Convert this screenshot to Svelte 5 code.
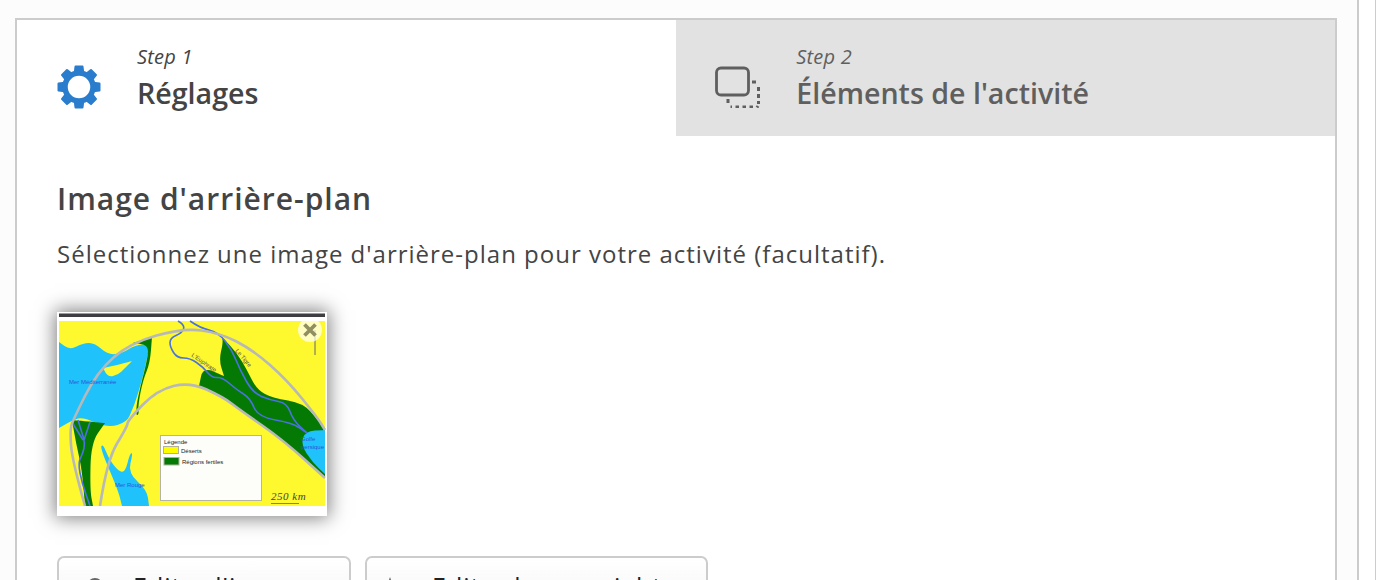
<script>
  const cogTeeth = [0, 45, 90, 135, 180, 225, 270, 315];

  // map outlines, in page coordinates because the svg viewBox starts at the thumb corner
  // a doubled point keeps a sharp corner through smooth()
  const med = [[59,342],[59,342],[70,350],[83,343],[95,343],[108,355],[123,353],[135,345],[150,344],[150,344],[143,377],[135,403],[132,410],[127,422],[108,428],[83,417],[73,420],[59,428],[59,428]];
  const redSea = [[100,448],[103,444],[108,457],[117,470],[125,473],[130,453],[133,453],[128,473],[147,490],[149,506],[149,506],[122,506],[122,506],[118,490]];
  const gulf = [[325,430],[325,430],[305,431],[301,445],[313,463],[325,474],[325,474]];
  const cyprus = [[103,368],[103,368],[117,365],[132,361],[132,361],[125,368],[118,375],[108,377]];
  const levant = [[133,343],[133,343],[152,337],[152,337],[150,363],[143,380],[138,405],[139,414],[136,416],[137,400],[148,357],[148,345]];
  const nile = [[72,420],[72,420],[105,423],[105,423],[91,443],[90,490],[93,506],[93,506],[85,506],[85,506],[82,470],[76,443]];
  const crescent = [[222,337],[222,337],[237,353],[247,370],[257,390],[273,398],[303,403],[318,420],[325,430],[325,430],[325,478],[325,478],[283,440],[240,410],[223,397],[199,386],[199,386],[203,367],[224,376],[224,376],[219,360],[223,343]];
  const euphrates = [[178,321],[185,325],[182,333],[170,338],[170,347],[177,358],[190,358],[203,367],[212,378],[222,377],[237,390],[250,398],[258,417],[293,423],[307,433]];
  const tigris = [[190,321],[200,328],[218,332],[232,350],[240,370],[253,393],[270,400],[287,403],[293,420],[307,433]];
  const nileRiver = [[78,420],[82,433],[85,443],[83,453],[78,463],[82,483],[90,506]];
  const outerArc = [[85,506],[72,460],[70,430],[73,420],[97,372],[130,343],[183,328],[220,333],[253,350],[287,380],[317,417],[325,430]];
  const innerArc = [[100,506],[107,460],[127,427],[128,420],[157,390],[190,382],[223,397],[240,410],[283,440],[325,478]];

  function smooth(pts, closed = false) {
    const mid = (a, b) => [(a[0] + b[0]) / 2, (a[1] + b[1]) / 2];
    let d = closed ? `M${mid(pts[pts.length - 1], pts[0])}` : `M${pts[0]}`;
    const last = closed ? pts.length : pts.length - 1;
    for (let i = closed ? 0 : 1; i < last; i++) {
      d += `Q${pts[i]} ${mid(pts[i], pts[(i + 1) % pts.length])}`;
    }
    return closed ? d + 'Z' : d + `L${pts[pts.length - 1]}`;
  }
</script>

<div class="page">
  <main class="wizard">
    <div class="steps">
      <div class="step active">
        <svg class="step-icon" width="44" height="44" viewBox="0 0 44 44" aria-hidden="true">
          <g fill="#2a7ccd">
            {#each cogTeeth as angle}
              <path d="M17.5 1.500q0-1 1-1h7q1 0 1 1l1 8h-11z" transform="rotate({angle} 22 22)" />
            {/each}
          </g>
          <circle cx="22" cy="22" r="14" fill="none" stroke="#2a7ccd" stroke-width="5.500" />
        </svg>
        <div class="step-text">
          <em>Step 1</em>
          <strong>Réglages</strong>
        </div>
      </div>
      <div class="step">
        <svg class="step-icon" width="46" height="42" viewBox="0 0 46 42" fill="none" stroke="#5f5f5f" aria-hidden="true">
          <rect x="1.500" y="2" width="32" height="27" rx="4.500" stroke-width="2.800" />
          <path d="M37 16h4M43.500 21v4M43.500 28v4M43.500 35v3M43 40l-1 1.500M38 41h-3.500M31 41h-3.500M24 41h-3.500M13 33v4M17 41h-1.500" stroke-width="3" />
        </svg>
        <div class="step-text">
          <em>Step 2</em>
          <strong>Éléments de l'activité</strong>
        </div>
      </div>
    </div>

    <section class="body">
      <h2>Image d'arrière-plan</h2>
      <p>Sélectionnez une image d'arrière-plan pour votre activité (facultatif).</p>

      <div class="thumb">
        <svg width="270" height="204" viewBox="57 312 270 204" aria-label="Carte du Croissant fertile">
          <rect x="57" y="312" width="270" height="204" fill="#fff" />
          <rect x="59" y="313.500" width="266" height="3.500" fill="#3d3d42" />
          <rect x="59" y="321" width="266" height="185" fill="#fdf92e" />

          <g fill="#1fc2fb">
            <path d={smooth(med, true)} />
            <path d={smooth(redSea, true)} />
          </g>
          <path d={smooth(cyprus, true)} fill="#fdf92e" />

          <g fill="#047a04">
            <path d={smooth(levant, true)} />
            <path d={smooth(nile, true)} />
            <path d={smooth(crescent, true)} />
          </g>
          <path d={smooth(gulf, true)} fill="#1fc2fb" />

          <g fill="none" stroke="#4a72e0" stroke-width="1.600">
            <path d={smooth(euphrates)} />
            <path d={smooth(tigris)} />
            <path d={smooth(nileRiver)} />
            <path d="M90 422l-6 18M72 422l11 18" />
          </g>

          <g fill="none" stroke="#b8b8b8" stroke-width="2.600">
            <path d={smooth(outerArc)} />
            <path d={smooth(innerArc)} />
          </g>

          <rect x="160.500" y="435.500" width="101" height="65" fill="#fdfefa" stroke="#b5b5a5" />
          <rect x="163.500" y="446.500" width="15" height="7" fill="#fdfd00" stroke="#b0b0a0" />
          <rect x="164" y="457.500" width="15" height="7.500" fill="#047a04" stroke="#b0b0a0" />
          <g font-family="Liberation Sans, sans-serif" font-size="6">
            <text x="164" y="443.500" fill="#222">Légende</text>
            <text x="181" y="453" fill="#222">Déserts</text>
            <text x="182" y="464" fill="#222">Régions fertiles</text>
            <g fill="#2f55d8">
              <text x="69" y="384">Mer Méditerranée</text>
              <text x="115" y="487">Mer Rouge</text>
              <text x="301" y="441">Golfe</text>
              <text x="301" y="448.500">persique</text>
            </g>
            <text x="191" y="356" fill="#555" transform="rotate(35 191 356)">L'Euphrate</text>
            <text x="235" y="351" fill="#555" transform="rotate(50 235 351)">Le Tigre</text>
          </g>
          <text x="271" y="500" font-family="Liberation Serif, serif" font-style="italic" font-size="11" letter-spacing="0.500" fill="#444">250 km</text>
          <path d="M271 503.500h28" stroke="#8a8a30" fill="none" />
          <path d="M315 330v25" stroke="#666" />
        </svg>
        <button class="remove" aria-label="Supprimer">
          <svg width="16" height="16" viewBox="0 0 16 16"><path d="M2.500 2.500l11 11M13.500 2.500l-11 11" stroke="#8f8f60" stroke-width="3.800" /></svg>
        </button>
      </div>

      <div class="actions">
        <button class="action first">
          <svg class="action-icon" width="24" height="18" viewBox="0 0 24 18" aria-hidden="true"><circle cx="7" cy="9" r="8" fill="#666" /></svg>
          Editer l'image
        </button>
        <button class="action second">
          <svg class="action-icon" width="24" height="18" viewBox="0 0 24 18" aria-hidden="true"><path d="M9 0l6 18h-12z" fill="#666" /></svg>
          Editer le copyright
        </button>
      </div>
    </section>
  </main>
  <div class="rail"></div>
</div>

<style>
  :global(body) {
    margin: 0;
    background: #fcfcfc;
    overflow: hidden;
  }

  .page {
    display: flex;
    height: 580px;
    padding: 18px 0 0 15px;
    box-sizing: border-box;
    overflow: hidden;
    font-family: "Open Sans", sans-serif;
    color: #444;
  }

  .wizard {
    width: 1322px;
    height: 700px;
    flex: none;
    box-sizing: border-box;
    border: 2px solid #ccc;
    background: #fff;
  }

  .steps {
    display: flex;
    height: 116px;
  }

  .step {
    flex: 1;
    display: flex;
    align-items: center;
    padding-left: 39px;
    background: #e2e2e2;
    color: #5f5f5f;
  }

  .step.active {
    background: #fff;
    color: #444;
    padding-left: 39.5px;
  }

  .step-icon {
    flex: none;
    margin-top: 18px;
  }

  .step-text {
    display: flex;
    flex-direction: column;
    margin-left: 35px;
    padding-top: 4px;
  }

  .step.active .step-text {
    margin-left: 36.5px;
  }

  .step-text em {
    font-size: 20px;
    line-height: 26px;
    letter-spacing: 0.2px;
  }

  .step-text strong {
    font-size: 28.6px;
    font-weight: 600;
    line-height: 46px;
  }

  .body {
    padding: 41px 40px 0;
  }

  h2 {
    margin: 0;
    font-size: 30px;
    font-weight: 600;
    line-height: 44px;
    letter-spacing: 1px;
  }

  p {
    margin: 18px 0 0;
    font-size: 24px;
    line-height: 30px;
    letter-spacing: 1px;
  }

  .thumb {
    position: relative;
    width: 270px;
    height: 204px;
    margin-top: 43px;
    box-shadow: 0 0 18px 2px rgba(0, 0, 0, 0.5);
  }

  .thumb > svg {
    display: block;
  }

  .remove {
    position: absolute;
    top: 6px;
    right: 5px;
    width: 24px;
    height: 24px;
    padding: 0;
    border: none;
    border-radius: 50%;
    background: rgba(255, 255, 255, 0.7);
    display: flex;
    align-items: center;
    justify-content: center;
  }

  .actions {
    display: flex;
    gap: 14px;
    margin-top: 40px;
  }

  .action {
    height: 60px;
    box-sizing: border-box;
    border: 2px solid #ccc;
    border-radius: 7px;
    background: linear-gradient(#fff, #f4f4f4);
    display: flex;
    align-items: center;
    font-family: "Open Sans", sans-serif;
    font-size: 25px;
    color: #222;
    letter-spacing: 1px;
  }

  .action.first {
    width: 294px;
    padding-left: 23px;
  }

  .action.second {
    width: 343px;
    padding-left: 14px;
  }

  .action-icon {
    flex: none;
    margin-right: 27px;
  }

  .action.first .action-icon {
    margin-left: 6px;
    margin-right: 21px;
  }

  .rail {
    width: 16px;
    flex: none;
    margin: -18px 0 0 20px;
    height: 580px;
    border-left: 2px solid #ccc;
    border-right: 1px solid #ccc;
    background: #fff;
  }
</style>
